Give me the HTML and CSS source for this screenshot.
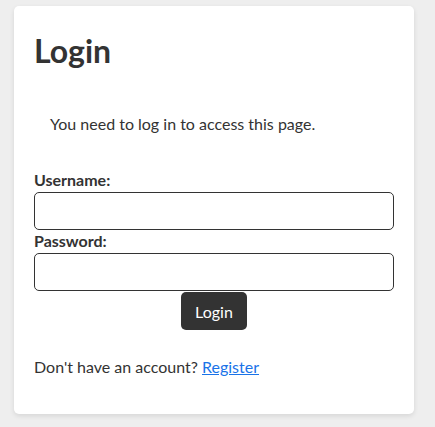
FILE: index.html
```html
<!DOCTYPE html>
<html>
<head>
<meta charset="utf-8">
<link rel="stylesheet" href="styles.css">
</head>
<body>
<div class="card">
  <h1 class="title">Login</h1>
  <div class="message">You need to log in to access this page.</div>
  <form class="form">
    <label class="label" for="u">Username:</label>
    <input class="input" id="u" type="text">
    <label class="label" for="p">Password:</label>
    <input class="input" id="p" type="password">
    <button class="btn" type="button">Login</button>
  </form>
  <p class="footer">Don't have an account? <a class="link" href="#">Register</a></p>
</div>
</body>
</html>
```
FILE: styles.css
```css
html, body { margin: 0; }
body {
  background: #eeeeee;
  font-family: Lato, sans-serif;
  font-size: 16px;
  color: #333;
  padding: 6px 21px 13px 14px;
}
.card {
  width: 400px;
  box-sizing: border-box;
  background: #fff;
  border-radius: 5px;
  box-shadow: 0 2px 5px rgba(0,0,0,0.1);
  padding: 25px 20px 38px 20px;
}
.title {
  font-size: 32px;
  font-weight: bold;
  margin: 0;
}
.message {
  padding: 16px;
  margin: 28px 0 21px 0;
}
.form {
  display: flex;
  flex-direction: column;
}
.label {
  font-weight: bold;
  margin: 0 0 3px 0;
}
.input {
  height: 38px;
  box-sizing: border-box;
  border: 1px solid #333;
  border-radius: 5px;
  margin: 0 0 1px 0;
  font: inherit;
}
.btn {
  align-self: center;
  background: #333;
  color: #fff;
  border: none;
  border-radius: 5px;
  font: inherit;
  height: 38px;
  padding: 0 14px;
  margin: 0;
}
.footer {
  margin: 27px 0 0 0;
}
.link { color: #1a73e8; }
```
